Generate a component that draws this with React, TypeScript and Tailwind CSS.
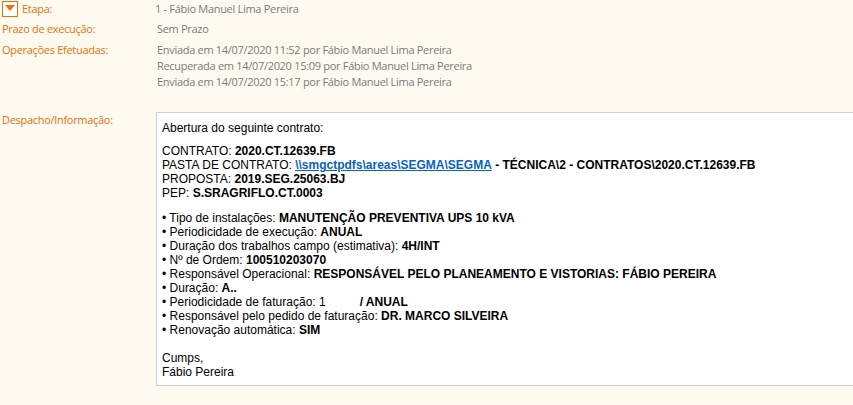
import React from 'react';

const Label = ({ children }: { children: React.ReactNode }) => (
  <div className="w-[155px] shrink-0 text-[#e8710a]">{children}</div>
);

const Bullet = ({ label, value }: { label: string; value?: React.ReactNode }) => (
  <div>
    • {label}: <b>{value}</b>
  </div>
);

const App = () => {
  return (
    <div className="w-[853px] h-[405px] overflow-hidden bg-[#fefaf0] font-['Open_Sans',sans-serif] text-[11px] tracking-[-0.3px] leading-[16px]">
      <div className="flex h-[17px] items-center">
        <div className="w-[155px] shrink-0 flex items-center gap-[4px] text-[#e8710a] pl-[2px]">
          <div className="w-[16px] h-[16px] border border-[#e8710a] bg-white flex items-center justify-center">
            <svg width="10" height="7" viewBox="0 0 10 7">
              <path d="M0 0 L10 0 L5 6 Z" fill="#e8710a" />
            </svg>
          </div>
          <span>Etapa:</span>
        </div>
        <div className="text-[#7a7a7a]">1 - Fábio Manuel Lima Pereira</div>
      </div>

      <div className="flex mt-[4px] pl-[2px]">
        <Label>Prazo de execução:</Label>
        <div className="text-[#7a7a7a]">Sem Prazo</div>
      </div>

      <div className="flex mt-[5px] pl-[2px]">
        <Label>Operações Efetuadas:</Label>
        <div className="text-[#7a7a7a]">
          <div>Enviada em 14/07/2020 11:52 por Fábio Manuel Lima Pereira</div>
          <div>Recuperada em 14/07/2020 15:09 por Fábio Manuel Lima Pereira</div>
          <div>Enviada em 14/07/2020 15:17 por Fábio Manuel Lima Pereira</div>
        </div>
      </div>

      <div className="flex mt-[22px] pl-[2px]">
        <div className="w-[154px] shrink-0 text-[#e8710a]">Despacho/Informação:</div>
        <div className="w-[720px] shrink-0 bg-white border border-[#cfcfcf] pl-[5px] pt-[8px] pb-[6px] font-['Liberation_Sans',Arial,sans-serif] text-[12px] tracking-normal leading-[14px] text-black">
          <div>Abertura do seguinte contrato:</div>
          <div className="mt-[9px]">
            CONTRATO: <b>2020.CT.12639.FB</b>
          </div>
          <div>
            PASTA DE CONTRATO:{' '}
            <a className="font-bold text-[#0563c1] underline" href="#">
              \\smgctpdfs\areas\SEGMA\SEGMA
            </a>{' '}
            <b>- TÉCNICA\2 - CONTRATOS\2020.CT.12639.FB</b>
          </div>
          <div>
            PROPOSTA: <b>2019.SEG.25063.BJ</b>
          </div>
          <div>
            PEP: <b>S.SRAGRIFLO.CT.0003</b>
          </div>
          <div className="mt-[11px]">
            <Bullet label="Tipo de instalações" value="MANUTENÇÃO PREVENTIVA UPS 10 kVA" />
            <Bullet label="Periodicidade de execução" value="ANUAL" />
            <Bullet label="Duração dos trabalhos campo (estimativa)" value="4H/INT" />
            <Bullet label="Nº de Ordem" value="100510203070" />
            <Bullet
              label="Responsável Operacional"
              value="RESPONSÁVEL PELO PLANEAMENTO E VISTORIAS: FÁBIO PEREIRA"
            />
            <div>
              • Duração: <b>A..</b>
            </div>
            <div>
              • Periodicidade de faturação: 1<span className="inline-block w-[34px]" />
              <b>/ ANUAL</b>
            </div>
            <Bullet label="Responsável pelo pedido de faturação" value="DR. MARCO SILVEIRA" />
            <Bullet label="Renovação automática" value="SIM" />
          </div>
          <div className="mt-[14px]">Cumps,</div>
          <div>Fábio Pereira</div>
        </div>
      </div>
    </div>
  );
};

export default App;
